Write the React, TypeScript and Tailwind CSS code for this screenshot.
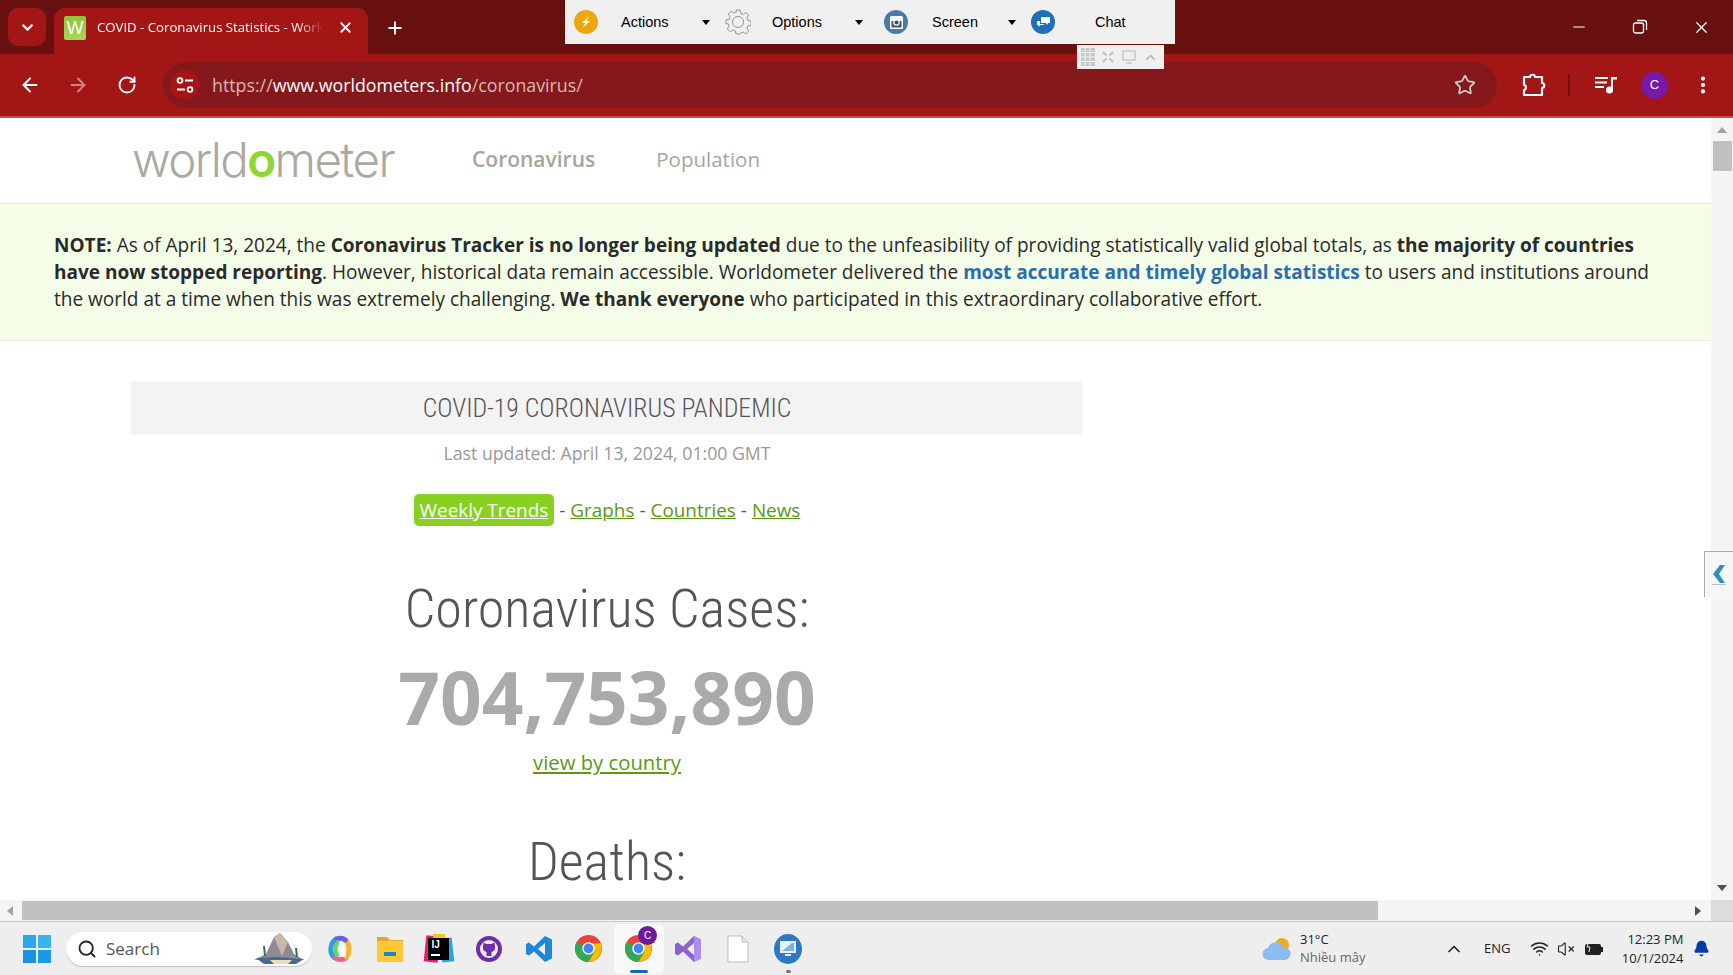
import React from "react"
import { ArrowLeft, ArrowRight, RotateCw, X, Plus, ChevronDown, ChevronUp, Star, Minus, Search, Wifi, VolumeX, Bell, EllipsisVertical } from "lucide-react"

const openSans = "font-['Open_Sans',sans-serif]"

const TuneIcon = () => (
  <svg width="20" height="20" viewBox="0 0 20 20" fill="none" stroke="#fff" strokeWidth="1.8">
    <circle cx="5" cy="5.5" r="2.4" />
    <path d="M10 5.5h8M2 14.5h8" />
    <circle cx="15" cy="14.5" r="2.4" />
  </svg>
)

const PuzzleIcon = () => (
  <svg width="26" height="26" viewBox="0 0 26 26" fill="none" stroke="#fff" strokeWidth="2.2" strokeLinejoin="round">
    <path d="M3 5h6c0-3 5-3 5 0h7v6c3 0 3 5 0 5v7H3v-5c2.500 0 2.500-5 0-5z" />
  </svg>
)

const MediaIcon = () => (
  <svg width="24" height="22" viewBox="0 0 24 22" fill="#fff">
    <rect x="1" y="3" width="13" height="2" />
    <rect x="1" y="7.500" width="12" height="2" />
    <rect x="1" y="12" width="9" height="2" />
    <rect x="17" y="3" width="2" height="13" />
    <rect x="17" y="3" width="6" height="2.500" />
    <circle cx="15.500" cy="16" r="3.500" />
  </svg>
)

const RestoreIcon = () => (
  <svg width="16" height="16" viewBox="0 0 16 16" fill="none" stroke="#fff" strokeWidth="1.3">
    <rect x="1.500" y="4" width="10" height="10" rx="2" />
    <path d="M5 1.500h7a2.500 2.500 0 0 1 2.500 2.500v7" />
  </svg>
)

const Favicon = () => (
  <div className="w-[22px] h-[24px] rounded-[2px] bg-gradient-to-b from-[#8cc43c] to-[#a8d45c] flex items-center justify-center shrink-0">
    <span className="text-white text-[18px] leading-none font-['Liberation_Sans',sans-serif]">W</span>
  </div>
)

const CaretDown = () => <span className="block w-0 h-0 border-x-[4px] border-x-transparent border-t-[5px] border-t-black" />

const CircleBadge = ({ color, children }: { color: string; children: React.ReactNode }) => (
  <div className={`w-6 h-6 rounded-full flex items-center justify-center shrink-0 ${color}`}>{children}</div>
)

const RemoteItem = (props: { icon: React.ReactNode; label: string; width: string; labelClass: string; caretClass?: string }) => (
  <div className={`flex items-center h-full pl-[9px] ${props.width}`}>
    {props.icon}
    <span className={`pt-[2px] text-[14.500px] text-black font-['Liberation_Sans',sans-serif] ${props.labelClass}`}>{props.label}</span>
    {props.caretClass && <div className={props.caretClass}><CaretDown /></div>}
  </div>
)

const RemoteToolbar = () => (
  <>
    <div className="absolute left-[565px] top-0 w-[610px] h-[44px] bg-[#f0f0f0] flex items-center">
      <RemoteItem
        width="w-[152px]"
        label="Actions"
        labelClass="ml-[23px]"
        caretClass="ml-auto mr-[7px]"
        icon={
          <CircleBadge color="bg-[#e9a90c]">
            <svg width="14" height="14" viewBox="0 0 14 14" fill="#fff">
              <path d="M10.500 1L3 8h3.500L3.500 13 11 6H7.500z" />
            </svg>
          </CircleBadge>
        }
      />
      <RemoteItem
        width="w-[158px]"
        label="Options"
        labelClass="ml-[22px]"
        caretClass="ml-auto mr-[12px]"
        icon={
          <svg width="26" height="26" viewBox="0 0 26 26" fill="none" stroke="#8a8a8a" strokeWidth="0.9" className="shrink-0 -ml-[1px] -mr-[1px]">
            <circle cx="13" cy="13" r="5.500" />
            <path d="M11 1h4l.7 3.300 2.400 1 2.800-1.800 2.800 2.800-1.800 2.800 1 2.400 3.100.7v4l-3.100.7-1 2.400 1.800 2.800-2.800 2.800-2.800-1.800-2.400 1L15 25h-4l-.7-3.100-2.400-1-2.800 1.800-2.800-2.800 1.800-2.800-1-2.400L1 15v-4l3.100-.7 1-2.400-1.800-2.800 2.800-2.800 2.800 1.800 2.400-1z" />
          </svg>
        }
      />
      <RemoteItem
        width="w-[147px]"
        label="Screen"
        labelClass="ml-[24px]"
        caretClass="ml-auto mr-[6px]"
        icon={
          <CircleBadge color="bg-[#4c7aa6]">
            <svg width="15" height="15" viewBox="0 0 15 15">
              <rect x="1" y="1" width="13" height="13" rx="1.500" fill="#fff" />
              <rect x="2.500" y="6" width="10" height="6.500" fill="#3b5874" />
              <circle cx="7.500" cy="7.500" r="3.200" fill="#fff" />
              <circle cx="7.500" cy="7.500" r="2" fill="#33485f" />
            </svg>
          </CircleBadge>
        }
      />
      <RemoteItem
        width="w-[153px]"
        label="Chat"
        labelClass="ml-[40px]"
        icon={
          <CircleBadge color="bg-[#1f6fb8]">
            <svg width="15" height="13" viewBox="0 0 15 13" fill="#fff">
              <path d="M5 1h9v6h-2l-1 2-1-2H5zM1 5h3v3h4v1H4l-1 2-1-2H1z" />
            </svg>
          </CircleBadge>
        }
      />
    </div>
    <div className="absolute left-[1077px] top-[45px] w-[87px] h-[24px] bg-[#f0f0f0] flex items-center justify-around pr-[2px]">
      <svg width="14" height="18" viewBox="0 0 14 18" fill="#c8c8c8">
        <path d="M0 0h14v18H0z" />
        <path d="M4 0v18M9 0v18M0 4.500h14M0 9h14M0 13.500h14" stroke="#f0f0f0" />
      </svg>
      <svg width="12" height="12" viewBox="0 0 12 12" fill="none" stroke="#c0c0c0" strokeWidth="2">
        <path d="M1 1l3.500 3.500M11 1L7.500 4.500M1 11l3.500-3.500M11 11L7.500 7.500" />
      </svg>
      <svg width="14" height="14" viewBox="0 0 14 14" fill="none" stroke="#c8c8c8" strokeWidth="1.500">
        <rect x="1" y="1" width="12" height="9" />
        <path d="M4 13h6" />
      </svg>
      <ChevronUp size={15} strokeWidth={2.5} color="#b8b8b8" />
    </div>
  </>
)

const TabStrip = () => (
  <div className="h-[54px] bg-[#680f0f] flex items-end relative shrink-0">
    <div className="absolute left-[8px] top-[8px] w-[38px] h-[38px] rounded-[10px] bg-[#a31616] flex items-center justify-center">
      <ChevronDown size={17} strokeWidth={3} color="#fff" />
    </div>
    <div className="ml-[54px] w-[314px] h-[46px] bg-[#a31616] rounded-t-[11px] flex items-center pl-[10px] pr-[14px] pb-[7px]">
      <Favicon />
      <span className={`ml-[11px] w-[227px] whitespace-nowrap overflow-hidden text-[13.200px] text-white ${openSans} [mask-image:linear-gradient(to_right,black_88%,transparent)]`}>
        COVID - Coronavirus Statistics - Worldometer
      </span>
      <X size={17} strokeWidth={2.5} color="#fff" className="ml-auto" />
    </div>
    <div className="w-[54px] h-[46px] flex items-center justify-center pb-[7px]">
      <Plus size={20} strokeWidth={2.2} color="#fff" />
    </div>
    <div className="ml-auto flex items-center h-[54px] pr-[22px] gap-[44px]">
      <Minus size={18} strokeWidth={1.5} color="#fff" />
      <RestoreIcon />
      <X size={19} strokeWidth={1.6} color="#fff" />
    </div>
  </div>
)

const AddressBar = () => (
  <div className="h-[64px] bg-[#a31616] border-b-[2px] border-[#c25050] flex items-center shrink-0">
    <div className="w-[163px] flex items-center pl-[19px]">
      <ArrowLeft size={22} strokeWidth={2.2} color="#fff" />
      <ArrowRight size={22} strokeWidth={2.2} color="#d87f7f" className="ml-[26px]" />
      <RotateCw size={20} strokeWidth={2.3} color="#fff" className="ml-[28px]" />
    </div>
    <div className="w-[1334px] h-[46px] rounded-full bg-[#84181a] flex items-center pl-[7px] pr-[21px]">
      <div className="w-[30px] h-[30px] rounded-full bg-[#a31616] flex items-center justify-center">
        <TuneIcon />
      </div>
      <span className={`ml-[12px] text-[17.800px] text-[#dcb6b6] ${openSans}`}>
        https://<span className="text-white">www.worldometers.info</span>/coronavirus/
      </span>
      <Star size={22} strokeWidth={2} color="#c9c9c9" className="ml-auto" />
    </div>
    <div className="flex-1 flex items-center pl-[24px]">
      <PuzzleIcon />
      <div className="w-[2px] h-[22px] bg-[#6e1012] ml-[21px]" />
      <div className="ml-[24px]"><MediaIcon /></div>
      <div className="ml-[23px] w-[27px] h-[27px] rounded-full bg-[#7719aa] flex items-center justify-center text-white text-[13px] font-['Liberation_Sans',sans-serif]">C</div>
      <EllipsisVertical size={22} strokeWidth={2.6} color="#fff" className="ml-[24px]" />
    </div>
  </div>
)

const SiteNav = () => (
  <div className="h-[86px] border-b border-[#e4e4ea] flex items-center">
    <div className="ml-[132px] w-[268px] -mt-[2px] text-[47.500px] leading-none tracking-[-1.600px] text-[#aca99f] font-['Inter',sans-serif] font-light">
      world<span className="text-[#8fd634] font-semibold">o</span>meter
    </div>
    <span className={`ml-[72px] -mt-[1px] text-[21px] font-semibold text-[#a8a59c] ${openSans}`}>Coronavirus</span>
    <span className={`ml-[61px] -mt-[2px] text-[20.500px] text-[#a8a59c] ${openSans}`}>Population</span>
  </div>
)

const Notice = () => (
  <div className={`h-[137px] bg-[#f4fde8] border-b border-[#e8eee0] pl-[54px] pr-[60px] pt-[28px] text-[19.050px] leading-[27px] text-[#2a2a2a] ${openSans}`}>
    <b>NOTE:</b> As of April 13, 2024, the <b>Coronavirus Tracker is no longer being updated</b> due to the unfeasibility of providing statistically valid global totals, as <b>the majority of countries have now stopped reporting</b>. However, historical data remain accessible. Worldometer delivered the <b className="text-[#2a6ead]">most accurate and timely global statistics</b> to users and institutions around the world at a time when this was extremely challenging. <b>We thank everyone</b> who participated in this extraordinary collaborative effort.
  </div>
)

const GreenLink = ({ children }: { children: React.ReactNode }) => (
  <a className="text-[#5a9a12] underline decoration-[#5a9a12]">{children}</a>
)

const Counter = () => (
  <div className="ml-[131px] w-[952px] flex flex-col items-center">
    <div className="mt-[40px] w-full h-[54px] bg-[#f3f3f3] flex items-center justify-center">
      <span className="text-[25.800px] font-light text-[#555] font-['Roboto',sans-serif] [font-stretch:75%]">COVID-19 CORONAVIRUS PANDEMIC</span>
    </div>
    <div className={`mt-[5px] text-[17.700px] leading-[27px] text-[#999] ${openSans}`}>Last updated: April 13, 2024, 01:00 GMT</div>
    <div className={`mt-[26px] h-[34px] flex items-center text-[18.900px] text-[#555] ${openSans}`}>
      <a className="bg-[#88d122] text-white underline rounded-[5px] px-[6px] h-[32px] flex items-center">Weekly Trends</a>
      <span className="mx-[5px]">-</span>
      <GreenLink>Graphs</GreenLink>
      <span className="mx-[5px]">-</span>
      <GreenLink>Countries</GreenLink>
      <span className="mx-[5px]">-</span>
      <GreenLink>News</GreenLink>
    </div>
    <div className="mt-[49px] text-[54.200px] leading-[66px] font-light text-[#555] font-['Roboto',sans-serif] [font-stretch:75%]">Coronavirus Cases:</div>
    <div className={`mt-[5px] text-[73px] leading-[100px] font-bold text-[#aaa] ${openSans}`}>704,753,890</div>
    <div className={`mt-0 text-[20.300px] leading-[30px] ${openSans}`}><GreenLink>view by country</GreenLink></div>
    <div className="mt-[52px] text-[54.200px] leading-[66px] font-light text-[#555] font-['Roboto',sans-serif] [font-stretch:75%]">Deaths:</div>
  </div>
)

const VScrollbar = () => (
  <div className="w-[22px] bg-[#f5f5f5] flex flex-col items-center shrink-0">
    <span className="mt-[9px] w-0 h-0 border-x-[5px] border-x-transparent border-b-[6px] border-b-[#a3a3a3]" />
    <div className="mt-[8px] w-[19px] h-[30px] bg-[#c1c1c1]" />
    <span className="mt-auto mb-[9px] w-0 h-0 border-x-[5px] border-x-transparent border-t-[6px] border-t-[#505050]" />
  </div>
)

const HScrollbar = () => (
  <div className="h-[21px] flex shrink-0 bg-[#f5f5f5]">
    <div className="w-[1711px] flex items-center">
      <span className="ml-[7px] w-0 h-0 border-y-[5px] border-y-transparent border-r-[6px] border-r-[#a3a3a3]" />
      <div className="ml-[9px] w-[1356px] h-[19px] bg-[#c1c1c1]" />
      <span className="ml-auto mr-[10px] w-0 h-0 border-y-[5px] border-y-transparent border-l-[6px] border-l-[#505050]" />
    </div>
    <div className="w-[22px] bg-[#dcdcdc]" />
  </div>
)

const ChromeLogo = ({ size = 26 }: { size?: number }) => (
  <svg width={size} height={size} viewBox="0 0 26 26">
    <circle cx="13" cy="13" r="13" fill="#ea4335" />
    <path d="M13 13L1.700 6.500A13 13 0 0 0 13 26l6-10z" fill="#34a853" />
    <path d="M13 8h11.700A13 13 0 0 1 13 26l6-10z" fill="#fbbc04" />
    <circle cx="13" cy="13" r="6" fill="#fff" />
    <circle cx="13" cy="13" r="4.700" fill="#4285f4" />
  </svg>
)

const taskApps: { key: string; node: React.ReactNode; active?: boolean; dot?: boolean }[] = [
  {
    key: "copilot",
    node: (
      <svg width="28" height="28" viewBox="0 0 28 28" fill="none" strokeLinecap="round">
        <path d="M8 22C3 18 4 8 10 4" stroke="#2f9ee8" strokeWidth="5" />
        <path d="M9 23c3 2 8 2 11 0" stroke="#f25c9a" strokeWidth="5" />
        <path d="M20 22c4-4 4-12 0-17" stroke="#f5b335" strokeWidth="5" />
        <path d="M11 4c3-1 6-1 8 1" stroke="#6c5ce7" strokeWidth="5" />
        <path d="M11 20c-2-4-2-9 1-13" stroke="#6fcf6a" strokeWidth="4" />
        <path d="M15 8l3 12" stroke="#fff" strokeWidth="4" />
      </svg>
    ),
  },
  {
    key: "files",
    node: (
      <svg width="28" height="28" viewBox="0 0 28 28">
        <path d="M1 2h10l3 3h13v4H1z" fill="#e3a72b" />
        <rect x="1" y="6" width="26" height="21" rx="1" fill="#fbc933" />
        <rect x="8" y="17" width="12" height="4" fill="#1a86d0" />
      </svg>
    ),
  },
  {
    key: "idea",
    node: (
      <div className="relative w-[28px] h-[30px]">
        <span className="absolute left-0 top-[2px] w-[14px] h-[26px] bg-[#f0157e] rotate-6" />
        <span className="absolute right-0 top-[4px] w-[12px] h-[24px] bg-[#26a6e6] -rotate-6" />
        <span className="absolute left-[8px] top-0 w-[12px] h-[8px] bg-[#fdc21c]" />
        <div className="absolute left-[3px] top-[4px] w-[21px] h-[22px] bg-black text-white text-[10px] font-bold leading-[11px] pl-[3px] pt-[1px] font-['Liberation_Sans',sans-serif]">
          IJ
          <div className="w-[9px] h-[2px] bg-white mt-[4px]" />
        </div>
      </div>
    ),
  },
  {
    key: "github",
    node: (
      <svg width="26" height="26" viewBox="0 0 26 26">
        <circle cx="13" cy="13" r="11" fill="none" stroke="#6f2da8" strokeWidth="4" />
        <path d="M7.500 6.500l3 1.500h5l3-1.500.5 4c.5 3-1 5-3.500 5.500v4h-5v-4C8 15.500 6.500 13.500 7 10.500z" fill="#6f2da8" />
      </svg>
    ),
  },
  {
    key: "vscode",
    node: (
      <svg width="28" height="28" viewBox="0 0 28 28">
        <path d="M20 1l7 3.500v19L20 27 9 16.500l-5 4-3-1.500V9l3-1.500 5 4zM20 8l-7 6 7 6z" fill="#1f88d6" fillRule="evenodd" />
      </svg>
    ),
  },
  { key: "chrome", node: <ChromeLogo size={27} /> },
  {
    key: "chrome-profile",
    active: true,
    node: (
      <div className="relative">
        <ChromeLogo size={27} />
        <span className="absolute left-[13px] top-[-9px] w-[19px] h-[19px] rounded-full bg-[#6b1b9a] text-white text-[10px] flex items-center justify-center font-['Liberation_Sans',sans-serif]">C</span>
      </div>
    ),
  },
  {
    key: "vs",
    node: (
      <svg width="28" height="28" viewBox="0 0 28 28">
        <path d="M20 1l7 3.500v19L20 27 9 16.500l-5 4-3-1.500V9l3-1.500 5 4zM20 8l-7 6 7 6z" fill="#8a63d2" fillRule="evenodd" />
        <path d="M20 1l7 3.500v19L20 27z" fill="#b18cf0" />
      </svg>
    ),
  },
  {
    key: "file",
    node: (
      <svg width="22" height="28" viewBox="0 0 22 28" fill="#fff" stroke="#bdbdbd">
        <path d="M1 1h14l6 6v20H1z" />
        <path d="M15 1v6h6" fill="#e8e8e8" />
      </svg>
    ),
  },
  {
    key: "remote",
    dot: true,
    node: (
      <svg width="28" height="30" viewBox="0 0 28 30">
        <ellipse cx="14" cy="15" rx="14" ry="15" fill="#2f78c4" />
        <rect x="6" y="7" width="16" height="12" fill="#e8f2fb" />
        <path d="M8 17l10-8h2v8z" fill="#7fb2e2" />
        <rect x="11" y="20" width="6" height="2" fill="#e8f2fb" />
      </svg>
    ),
  },
]

const Taskbar = () => (
  <div className="h-[54px] bg-[#eeeeee] border-t border-[#c8c8c8] flex items-center shrink-0">
    <div className="ml-[23px] w-[28px] h-[28px] grid grid-cols-2 gap-[2px] shrink-0">
      <span className="bg-[#2aa7ee]" />
      <span className="bg-[#35b6f2]" />
      <span className="bg-[#1a90e0]" />
      <span className="bg-[#1c98e6]" />
    </div>
    <div className="ml-[15px] w-[246px] h-[34px] rounded-full bg-white shadow-[0_1px_1px_rgba(0,0,0,0.2)] flex items-center pl-[11px] pr-[4px]">
      <Search size={20} strokeWidth={2.2} color="#222" />
      <span className={`ml-[9px] text-[17px] text-[#555] ${openSans}`}>Search</span>
      <svg width="56" height="34" viewBox="0 0 56 34" className="ml-auto">
        <path d="M2 28l12-6 8-17 6-4 8 9 6 12 10 6z" fill="#8f8a96" />
        <path d="M22 5l6-4 8 9-6 14z" fill="#c9b8a8" />
        <path d="M12 14l1 10M44 16l1 9" stroke="#3b6b5f" strokeWidth="2" />
        <path d="M4 26l20-1 28 2-8 5H12z" fill="#4b6796" />
        <path d="M18 28h22l-4 4H22z" fill="#f0d9b5" />
      </svg>
    </div>
    <div className="ml-[3px] flex items-center">
      {taskApps.map((app) => (
        <div
          key={app.key}
          className={`relative w-[49.800px] h-[50px] flex items-center justify-center rounded-[5px] ${app.active ? "bg-[#f8f8f8]" : ""}`}
        >
          {app.node}
          {app.active && <span className="absolute bottom-[1px] w-[18px] h-[3px] rounded-full bg-[#0f6cbd]" />}
          {app.dot && <span className="absolute bottom-[1px] w-[5px] h-[3px] rounded-full bg-[#777]" />}
        </div>
      ))}
    </div>
    <div className="ml-[449px] flex items-center">
      <svg width="30" height="26" viewBox="0 0 30 26">
        <circle cx="20" cy="9" r="7" fill="#f5a623" />
        <path d="M7 24a6 6 0 0 1-1-12 8 8 0 0 1 15-1 6.500 6.500 0 0 1 2 13z" fill="#8cbdf0" />
      </svg>
      <div className={`ml-[8px] w-[120px] -mt-[2px] text-[13px] leading-[18px] ${openSans}`}>
        <div className="text-[#222]">31°C</div>
        <div className="text-[#666]">Nhiều mây</div>
      </div>
    </div>
    <ChevronUp size={20} strokeWidth={2} color="#222" className="ml-[24px]" />
    <span className={`ml-[20px] text-[13px] text-[#222] ${openSans}`}>ENG</span>
    <Wifi size={19} strokeWidth={2} color="#222" className="ml-[20px]" />
    <VolumeX size={18} strokeWidth={1.5} color="#222" className="ml-[8px]" />
    <svg width="20" height="16" viewBox="0 0 20 16" className="ml-[9px]">
      <rect x="1" y="3" width="16" height="11" rx="2" fill="#222" />
      <rect x="17" y="6" width="2" height="5" fill="#222" />
      <path d="M5 0l-2 6h3l-1 5" stroke="#eee" strokeWidth="1" fill="none" />
    </svg>
    <div className={`ml-[12px] w-[67px] text-[13px] leading-[19px] whitespace-nowrap text-[#222] ${openSans} flex flex-col items-end`}>
      <span>12:23 PM</span>
      <span>10/1/2024</span>
    </div>
    <Bell size={17} fill="#0b3aa8" color="#0b3aa8" className="ml-[10px]" />
  </div>
)

export default function App() {
  return (
    <div className="relative w-[1733px] h-[975px] overflow-hidden flex flex-col bg-white">
      <TabStrip />
      <AddressBar />
      <div className="flex-1 min-h-0 flex">
        <div className="flex-1 min-w-0 overflow-hidden bg-white">
          <SiteNav />
          <Notice />
          <Counter />
        </div>
        <VScrollbar />
      </div>
      <HScrollbar />
      <Taskbar />
      <RemoteToolbar />
      <div className="absolute left-[1704px] top-[551px] w-[29px] h-[46px] bg-[#f6f6f6] border-l border-t border-[#aaaaaa] flex items-center justify-center">
        <svg width="14" height="20" viewBox="0 0 14 20">
          <path d="M8 0h5L7 9l6 9H8L1 9z" fill="#2f8fc4" />
          <path d="M0 19.500h14" stroke="#bbbbbb" />
        </svg>
      </div>
    </div>
  )
}
